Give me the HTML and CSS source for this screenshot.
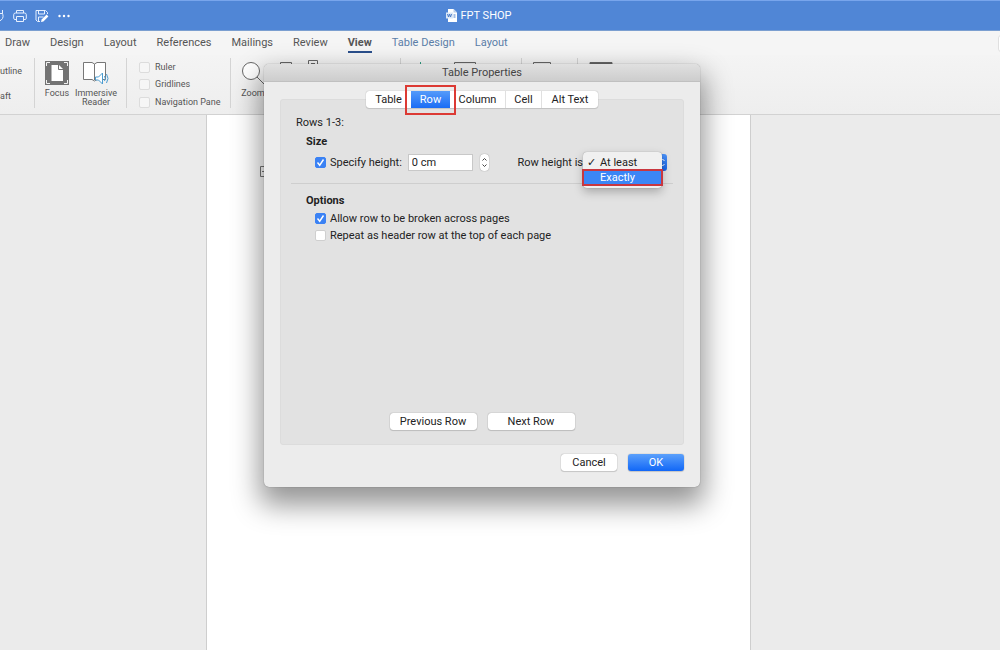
FILE: index.html
```
<!DOCTYPE html>
<html lang="en">
<head>
  <meta charset="UTF-8" />
  <title>FPT SHOP</title>
  <meta name="viewport" content="width=device-width, initial-scale=1.0" />
  <link rel="stylesheet" href="styles.css">
</head>
<body>

  <div class="app">
    <header class="titlebar">
      <div class="quick-access">
        <button class="quick-btn" title="Redo">
          <svg width="14" height="14" viewBox="0 0 14 14"><path d="M4 3.2A5 5 0 1 0 11 4M11.5 1v3.5H8" /></svg>
        </button>
        <button class="quick-btn" title="Print">
          <svg width="14" height="14" viewBox="0 0 14 14"><path d="M3.5 4V1.5h7V4M3.5 10.5H2A1.3 1.3 0 0 1 .7 9.2V5.8A1.8 1.8 0 0 1 2.5 4h9a1.8 1.8 0 0 1 1.8 1.8v3.4a1.3 1.3 0 0 1-1.3 1.3h-1.5M3.5 7.5h7v5h-7z" /></svg>
        </button>
        <button class="quick-btn" title="Save">
          <svg width="14" height="14" viewBox="0 0 14 14"><path d="M5 12.5H2.5L1 11V1.5h9.5L12.5 3.5V5M3.5 1.5v3.5h6V1.5M3.5 12V8h5" /><path class="solid" d="M6 13l.6-2.4 5-5 1.800 1.800-5 5z" /></svg>
        </button>
        <button class="quick-btn" title="More">
          <svg width="14" height="14" viewBox="0 0 14 14"><circle class="solid" cx="2.5" cy="7" r="1.2" /><circle class="solid" cx="7" cy="7" r="1.2" /><circle class="solid" cx="11.5" cy="7" r="1.2" /></svg>
        </button>
      </div>
      <div class="doc-title">
        <svg width="11" height="13" viewBox="0 0 11 13">
          <path fill="#fff" d="M2 0h5.5L11 3.5V13H2z" />
          <path fill="#b9cdea" d="M7.5 0v3.5H11z" />
          <path fill="#dce8f7" d="M0 3.5h7v6H0z" />
          <path fill="none" stroke="#4a7cc8" d="M1.5 5l1 3 1-3 1 3 1-3M7.5 6h2M7.5 8h2" />
        </svg>
        <span>FPT SHOP</span>
      </div>
    </header>

    <nav class="tabs">
      <a href="#">Draw</a>
      <a href="#">Design</a>
      <a href="#">Layout</a>
      <a href="#">References</a>
      <a href="#">Mailings</a>
      <a href="#">Review</a>
      <a href="#" class="active">View</a>
      <a href="#" class="context">Table Design</a>
      <a href="#" class="context">Layout</a>
      <button class="share" aria-label="Share"></button>
    </nav>

    <div class="ribbon">
      <div class="group views">
        <button class="view-btn" aria-label="Outline">utline</button>
        <button class="view-btn" aria-label="Draft">aft</button>
      </div>

      <div class="group immersive">
        <button class="tool">
          <svg width="24" height="24" viewBox="0 0 24 24">
            <path fill="#737373" d="M0 0h24v24H0z" />
            <path fill="none" stroke="#f3f3f3" d="M1.5 5V1.5H5M19 1.5h3.5V5M22.5 19v3.5H19M5 22.5H1.5V19" />
            <path fill="#fff" d="M6.5 4h7.5l4 4v12H6.5z" />
            <path fill="none" stroke="#737373" d="M13.5 4v4.5H18" />
          </svg>
          <span>Focus</span>
        </button>
        <button class="tool">
          <svg width="28" height="24" viewBox="0 0 28 24">
            <path fill="#fff" stroke="#777" d="M1.5 1.5H10l2.5 1.5L15 1.5h8.5v17H15L12.5 20 10 18.5H1.5z" />
            <path fill="none" stroke="#777" d="M12.5 3v16" />
            <path fill="#fff" stroke="#4b9cd0" d="M13.5 16h3l4-4v11l-4-4h-3z" />
            <path fill="none" stroke="#4b9cd0" d="M22.5 15q1.5 2.500 0 5M24.5 13q3 4.500 0 9" />
          </svg>
          <span>Immersive<br />Reader</span>
        </button>
      </div>

      <div class="group show">
        <label class="show-item"><input type="checkbox" />Ruler</label>
        <label class="show-item"><input type="checkbox" />Gridlines</label>
        <label class="show-item"><input type="checkbox" />Navigation Pane</label>
      </div>

      <div class="group zoom">
        <button class="tool">
          <svg width="24" height="24" viewBox="0 0 24 24" fill="none" stroke="#666"><circle cx="10" cy="10" r="8.5" fill="#fff" /><path d="M16 16l7 7" /></svg>
          <span>Zoom</span>
        </button>
        <svg class="icon" width="14" height="16" viewBox="0 0 14 16"><path d="M1.5 .5h11v15h-11z" /></svg>
        <svg class="icon tall" width="12" height="18" viewBox="0 0 12 18"><path d="M1.5 .5h9v17h-9zM4 3.5h4" /></svg>
      </div>

      <div class="group window">
        <svg class="icon plus" width="14" height="18" viewBox="0 0 14 18"><path d="M7.5 0v14M1 7.500h13" /></svg>
        <svg class="icon" width="24" height="18" viewBox="0 0 24 18"><path d="M1.5 .5h21v16h-21z" /></svg>
      </div>

      <div class="group switch">
        <svg class="icon" width="20" height="18" viewBox="0 0 20 18"><path d="M1.5 .5h17v16h-17z" /></svg>
      </div>

      <div class="group macros">
        <svg class="icon" width="24" height="18" viewBox="0 0 24 18"><path d="M1 .5h22v16H1zM1 1.5h22" /></svg>
      </div>
    </div>

    <main class="workspace">
      <div class="page">
        <svg class="table-handle" width="11" height="11" viewBox="0 0 11 11" fill="none" stroke="#777"><path d="M.5 .5h10v10H.5zM5.5 2v7M2 5.500h7" /></svg>
      </div>
    </main>
  </div>

  <div class="dialog" role="dialog" aria-labelledby="dialog-title">
    <h1 class="dialog-title" id="dialog-title">Table Properties</h1>
    <form class="dialog-body">
      <div class="segments">
        <button type="button" class="segment seg-table">Table</button>
        <button type="button" class="segment seg-row">Row</button>
        <button type="button" class="segment seg-column">Column</button>
        <button type="button" class="segment seg-cell">Cell</button>
        <button type="button" class="segment seg-alt">Alt Text</button>
      </div>

      <div class="panel">
        <p class="rows-label">Rows 1-3:</p>
        <h2>Size</h2>
        <div class="size-row">
          <label class="check"><input type="checkbox" checked />Specify height:</label>
          <input class="height-input" type="text" value="0 cm" aria-label="Height" />
          <button type="button" class="stepper" aria-label="Change height">
            <svg width="7" height="11" viewBox="0 0 7 11"><path d="M1.5 3.5l2-2 2 2M1.5 7.5l2 2 2-2" /></svg>
          </button>
          <label class="height-rule" for="rule">Row height is</label>
          <div class="rule-wrap">
            <select class="rule" id="rule">
              <option>At least</option>
              <option>Exactly</option>
            </select>
            <svg class="rule-arrows" width="5" height="9" viewBox="0 0 5 9"><path d="M.5 3l2-2 2 2M.5 6l2 2 2-2" /></svg>
            <ul class="menu">
              <li><span class="tick">✓</span>At least</li>
              <li class="highlight"><span class="tick"></span>Exactly</li>
            </ul>
          </div>
        </div>
        <hr />
        <h2>Options</h2>
        <label class="check option"><input type="checkbox" checked />Allow row to be broken across pages</label>
        <label class="check option"><input type="checkbox" />Repeat as header row at the top of each page</label>

        <div class="row-nav">
          <button type="button" class="btn wide">Previous Row</button>
          <button type="button" class="btn wide">Next Row</button>
        </div>
      </div>

      <div class="actions">
        <button type="button" class="btn">Cancel</button>
        <button type="button" class="btn primary">OK</button>
      </div>
    </form>
  </div>

</body>
</html>
```

FILE: styles.css
```
* {
  box-sizing: border-box;
}

body {
  margin: 0;
  font-family: Roboto, "Liberation Sans", sans-serif;
  font-size: 11px;
  color: #222;
}

button, input, select {
  font: inherit;
  color: inherit;
  margin: 0;
  padding: 0;
  border: none;
  background: none;
}

.app {
  display: flex;
  flex-direction: column;
  height: 100vh;
  overflow: hidden;
}

/* title bar */
.titlebar {
  display: grid;
  grid-template-columns: 1fr auto 1fr;
  align-items: center;
  height: 31px;
  padding-right: 43px;
  background: #5086d6;
  border-top: 1px solid #78a5ec;
  border-bottom: 1px solid #7b9fd0;
  color: #fff;
}

.quick-access {
  display: flex;
  gap: 8px;
  margin-left: -9px;
}

.quick-btn svg {
  display: block;
  fill: none;
  stroke: #e6f0ff;
}

.quick-btn .solid {
  fill: #fff;
  stroke: none;
}

.doc-title {
  display: flex;
  align-items: center;
  gap: 4px;
}

/* ribbon tabs */
.tabs {
  display: flex;
  gap: 20px;
  height: 24px;
  padding-left: 5px;
  background: #f5f5f5;
}

.tabs a {
  height: 22px;
  line-height: 23px;
  color: #555;
  text-decoration: none;
}

.tabs .active {
  font-weight: 700;
  border-bottom: 2px solid #2b4f8c;
}

.tabs .context {
  color: #5b7ea8;
}

.share {
  width: 4px;
  height: 17px;
  margin: 4px -2px 0 auto;
  background: #fff;
  border: 1px solid #e0e0e0;
  border-radius: 3px 0 0 3px;
}

/* ribbon */
.ribbon {
  display: flex;
  height: 60px;
  padding-top: 3px;
  background: linear-gradient(#f4f4f4, #eee);
  border-bottom: 1px solid #d2d2d2;
  font-size: 9px;
  line-height: 9px;
  color: #555;
}

.group {
  display: flex;
  flex: none;
  height: 50px;
  border-right: 1px solid #d4d4d4;
}

.views {
  flex-direction: column;
  align-items: flex-start;
  gap: 16px;
  width: 35px;
  padding-top: 9px;
}

.immersive {
  width: 92px;
  padding-left: 6px;
}

.tool {
  display: flex;
  flex-direction: column;
  align-items: center;
  flex: none;
  gap: 4px;
  height: 50px;
  padding-top: 3px;
  line-height: 9px;
}

.immersive .tool {
  width: 32px;
}

.immersive .tool + .tool {
  width: 46px;
}

.show {
  flex-direction: column;
  gap: 6px;
  width: 104px;
  padding: 4px 0 0 12px;
}

.show-item {
  display: flex;
  align-items: center;
  gap: 5px;
  height: 12px;
}

.show-item input {
  appearance: none;
  width: 11px;
  height: 11px;
  background: #f6f6f6;
  border: 1px solid #dcdcdc;
  border-radius: 2px;
}

.icon {
  margin-top: 4px;
  fill: none;
  stroke: #666;
}

.tall {
  margin-top: 2px;
}

.plus {
  stroke: #2f9e83;
}

.zoom {
  gap: 14px;
  width: 170px;
  padding-left: 10px;
}

.window {
  gap: 26px;
  width: 121px;
  padding-left: 12px;
}

.switch {
  width: 56px;
  padding-left: 10px;
}

.macros {
  padding-left: 11px;
  border-right: none;
}

/* document area */
.workspace {
  display: flex;
  justify-content: center;
  flex: 1;
  padding-right: 43px;
  background: #ebebeb;
}

.page {
  width: 545px;
  padding: 51px 53px;
  background: #fff;
  border: 1px solid #cecece;
  border-width: 0 1px;
}

/* dialog */
.dialog {
  position: absolute;
  top: 64px;
  left: calc(50% - 236px);
  width: 436px;
  background: #ececec;
  border-radius: 5px;
  box-shadow: 0 0 1px rgba(0,0,0,0.5), 0 14px 28px 4px rgba(0,0,0,0.42);
}

.dialog-title {
  height: 18px;
  margin: 0;
  font-size: 11px;
  font-weight: 400;
  line-height: 18px;
  text-align: center;
  color: #444;
  background: linear-gradient(#e0e0e0, #cdcdcd);
  border-bottom: 1px solid #c0c0c0;
  border-radius: 5px 5px 0 0;
}

.dialog-body {
  padding: 9px 16px 16px;
}

.segments {
  position: relative;
  z-index: 1;
  display: flex;
  width: 232px;
  height: 17px;
  margin: 0 auto -9px;
  background: #fff;
  border-radius: 3px;
  box-shadow: 0 0 1px rgba(0,0,0,0.4), 0 1px 1px rgba(0,0,0,0.1);
}

.segment {
  line-height: 17px;
  border-right: 1px solid #e0e0e0;
}

.seg-table {
  width: 45px;
  border-right: none;
}

.seg-row {
  position: relative;
  width: 39px;
  color: #fff;
  background: linear-gradient(#559bfa, #1a6cf5);
  border-right: none;
}

/* red frame round the selected tab */
.seg-row::after {
  content: "";
  position: absolute;
  inset: -6px -6px -7px;
  border: 2px solid #dc3a34;
}

.seg-column {
  width: 56px;
}

.seg-cell {
  width: 36px;
}

.seg-alt {
  width: 56px;
  border-right: none;
}

.panel {
  display: flex;
  flex-direction: column;
  min-height: 346px;
  padding: 13px 10px 14px;
  background: #e2e2e2;
  border: 1px solid #dcdcdc;
  border-radius: 3px;
}

.rows-label {
  margin: 0 5px;
  line-height: 19px;
}

.panel h2 {
  margin: 0 15px;
  font-size: 11px;
  font-weight: 700;
  line-height: 19px;
}

.size-row {
  display: flex;
  align-items: center;
  height: 22px;
  padding: 0 6px 0 24px;
}

.check {
  display: flex;
  align-items: center;
  gap: 4px;
  white-space: nowrap;
}

.check input {
  appearance: none;
  width: 11px;
  height: 11px;
  background: #fff;
  border: 1px solid #cfcfcf;
  border-radius: 2px;
}

.check input:checked {
  background: #3b82f4 url("data:image/svg+xml,%3Csvg xmlns='http://www.w3.org/2000/svg' viewBox='0 0 11 11'%3E%3Cpath d='M2.5 5.5l2.2 2.7 3.8-5.7' fill='none' stroke='white' stroke-width='1.4'/%3E%3C/svg%3E") center / 11px 11px;
  border-color: #3b82f4;
}

.option {
  height: 17px;
  padding-left: 24px;
}

.height-input {
  width: 65px;
  height: 17px;
  margin-left: 6px;
  padding-left: 3px;
  background: #fff;
  border: 1px solid #c8c8c8;
}

.stepper {
  display: flex;
  align-items: center;
  justify-content: center;
  width: 9px;
  height: 17px;
  margin-left: 7px;
  background: #fff;
  border-radius: 4px;
  box-shadow: 0 0 1px rgba(0,0,0,0.5);
}

.stepper svg {
  flex: none;
  fill: none;
  stroke: #444;
}

.height-rule {
  margin-left: auto;
  white-space: nowrap;
}

.rule-wrap {
  position: relative;
  width: 84px;
}

.rule {
  appearance: none;
  display: block;
  width: 84px;
  height: 17px;
  padding-left: 17px;
  background: linear-gradient(#4b92f8, #1763e6) right / 14px 17px no-repeat #fff;
  border-radius: 3px;
}

.rule-arrows {
  position: absolute;
  top: 4px;
  right: 2px;
  fill: none;
  stroke: #fff;
}

.menu {
  position: absolute;
  top: -2px;
  left: 0;
  width: 79px;
  margin: 0;
  padding: 3px 0;
  list-style: none;
  background: #f0f0f0;
  border-radius: 4px;
  box-shadow: 0 0 1px rgba(0,0,0,0.4), 0 4px 10px rgba(0,0,0,0.25);
}

.menu li {
  display: flex;
  height: 15px;
  line-height: 15px;
}

.menu .tick {
  width: 17px;
  padding-left: 4px;
}

.menu .highlight {
  color: #fff;
  background: #3b86f6;
  outline: 2px solid #c9373f;
  outline-offset: -1px;
}

hr {
  width: 100%;
  margin: 10px 0 7px;
  border: none;
  border-top: 1px solid #cecece;
}

.row-nav {
  display: flex;
  justify-content: center;
  gap: 11px;
  margin-top: auto;
}

.btn {
  width: 56px;
  height: 17px;
  line-height: 17px;
  background: #fff;
  border-radius: 3px;
  box-shadow: 0 0 1px rgba(0,0,0,0.5), 0 1px 1px rgba(0,0,0,0.12);
}

.wide {
  width: 87px;
}

.primary {
  color: #fff;
  background: linear-gradient(#5ba0fb, #1167f7);
}

.actions {
  display: flex;
  justify-content: flex-end;
  gap: 11px;
  margin-top: 9px;
}
```
